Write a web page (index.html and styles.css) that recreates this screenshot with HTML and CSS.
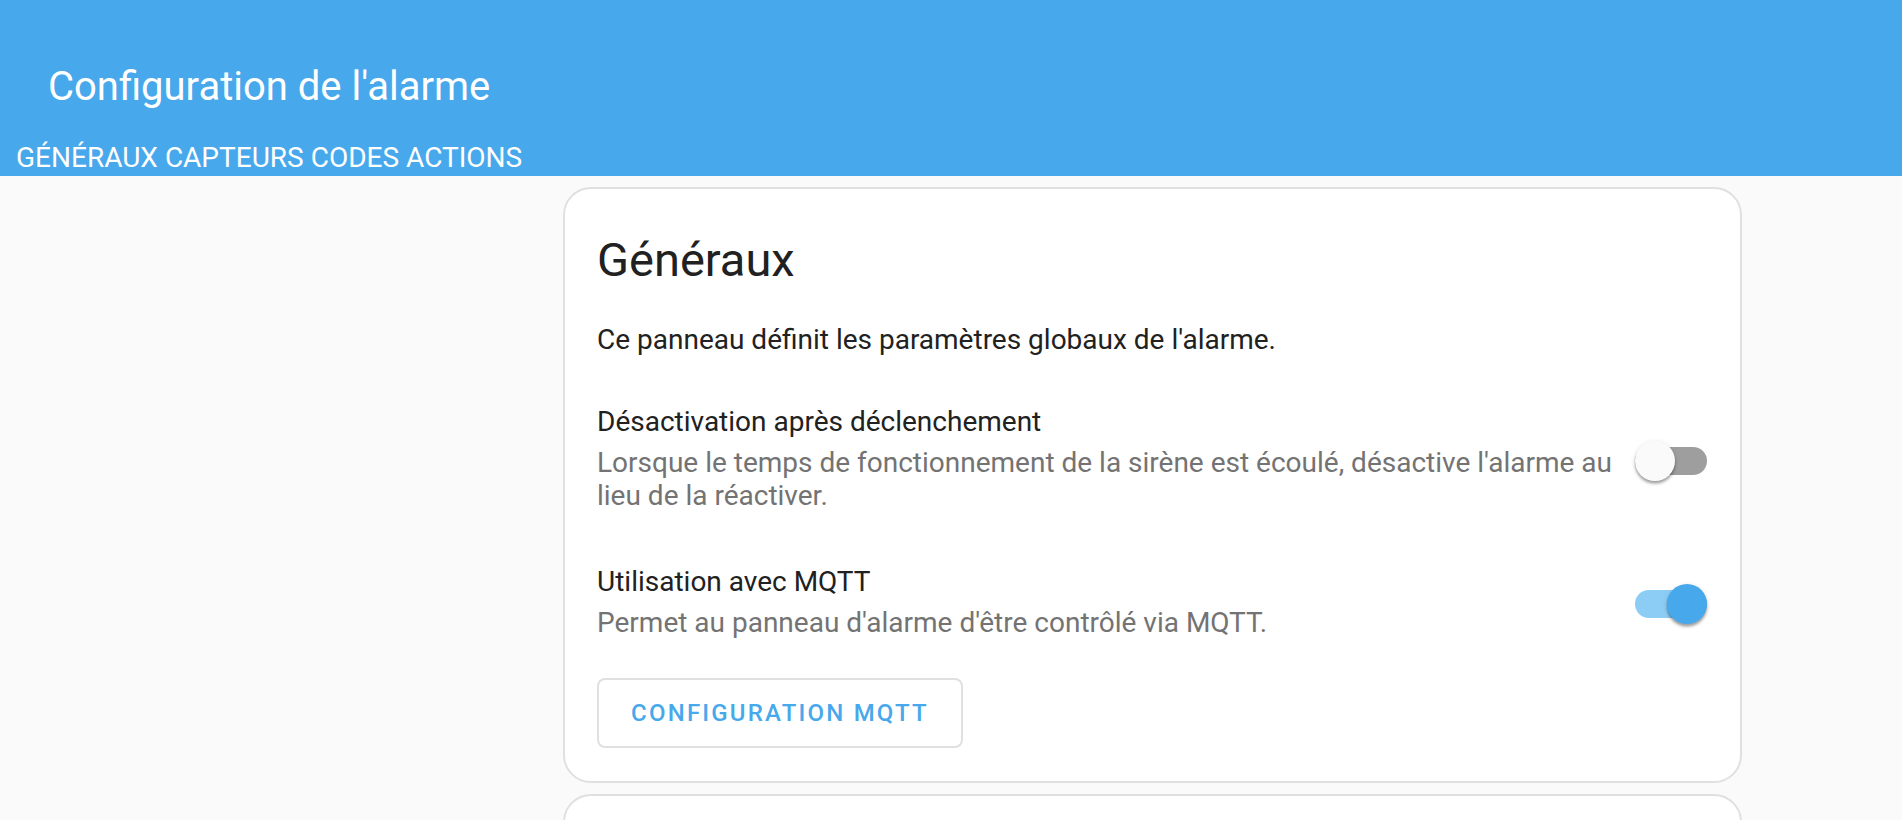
FILE: index.html
```html
<!DOCTYPE html>
<html lang="fr">
<head>
<meta charset="utf-8">
<title>Configuration de l'alarme</title>
<link rel="stylesheet" href="styles.css">
</head>
<body>
<header class="header">
  <div class="toolbar">Configuration de l'alarme</div>
  <nav class="tabs">
    <span class="tab">GÉNÉRAUX</span>
    <span class="tab">CAPTEURS</span>
    <span class="tab">CODES</span>
    <span class="tab">ACTIONS</span>
  </nav>
</header>
<main class="content">
  <section class="card">
    <h1 class="card-title">Généraux</h1>
    <p class="intro">Ce panneau définit les paramètres globaux de l'alarme.</p>
    <div class="row row-first">
      <div class="row-text">
        <div class="row-heading">Désactivation après déclenchement</div>
        <div class="row-desc">Lorsque le temps de fonctionnement de la sirène est écoulé, désactive l'alarme au lieu de la réactiver.</div>
      </div>
      <div class="switch">
        <div class="track"></div>
        <div class="knob"></div>
      </div>
    </div>
    <div class="row row-second">
      <div class="row-text">
        <div class="row-heading">Utilisation avec MQTT</div>
        <div class="row-desc">Permet au panneau d'alarme d'être contrôlé via MQTT.</div>
      </div>
      <div class="switch on">
        <div class="track"></div>
        <div class="knob"></div>
      </div>
    </div>
    <div class="actions">
      <button class="btn">CONFIGURATION MQTT</button>
    </div>
  </section>
  <section class="card card-next"></section>
</main>
</body>
</html>
```
FILE: styles.css
```css
* { box-sizing: border-box; }
html, body { margin: 0; padding: 0; }
body {
  background: #fafafa;
  font-family: Roboto, "Liberation Sans", sans-serif;
  color: #212121;
  width: 1902px;
  height: 820px;
  overflow: hidden;
}
.header {
  background: #48a8ec;
  color: #ffffff;
  height: 176px;
  display: flex;
  flex-direction: column;
}
.toolbar {
  height: 141px;
  padding: 63px 0 0 48px;
  font-size: 40px;
  line-height: normal;
}
.tabs {
  display: flex;
  gap: 7px;
  padding-left: 16px;
  font-size: 28px;
  line-height: normal;
}
.content {
  padding: 11px 0 0 563px;
  display: flex;
  flex-direction: column;
  gap: 11px;
}
.card {
  width: 1179px;
  background: #ffffff;
  border: 2px solid #e0e0e0;
  border-radius: 28px;
  padding: 43px 33px 33px 32px;
}
.card-next { height: 60px; }
.card-title {
  margin: 0;
  font-size: 47px;
  font-weight: 400;
  line-height: normal;
  color: #212121;
}
.intro {
  margin: 36px 0 0;
  font-size: 28px;
  line-height: normal;
}
.row {
  display: flex;
  align-items: center;
  gap: 16px;
}
.row-first { margin-top: 49px; }
.row-second { margin-top: 53px; }
.row-text { flex: 1; }
.row-heading {
  font-size: 28px;
  line-height: normal;
  color: #212121;
}
.row-desc {
  margin-top: 8px;
  font-size: 28px;
  line-height: normal;
  color: #737373;
}
.switch {
  position: relative;
  width: 72px;
  height: 40px;
  margin-top: 4px;
  flex: none;
}
.track {
  position: absolute;
  left: 0;
  top: 6px;
  width: 72px;
  height: 28px;
  border-radius: 14px;
  background: #9e9e9e;
}
.knob {
  position: absolute;
  left: 0;
  top: 0;
  width: 40px;
  height: 40px;
  border-radius: 50%;
  background: #fafafa;
  box-shadow: 0 3px 3px rgba(0,0,0,0.2), 0 2px 2px rgba(0,0,0,0.14), 0 1px 5px rgba(0,0,0,0.12);
}
.switch.on .track { background: #8ccdf5; }
.switch.on .knob { left: 32px; background: #48a8ec; }
.actions { margin-top: 39px; }
.btn {
  display: block;
  width: 366px;
  height: 70px;
  background: #ffffff;
  border: 2px solid #e0e0e0;
  border-radius: 8px;
  color: #48a8ec;
  font-family: Roboto, "Liberation Sans", sans-serif;
  font-size: 24px;
  font-weight: 500;
  letter-spacing: 2.2px;
  padding: 0;
}
```
